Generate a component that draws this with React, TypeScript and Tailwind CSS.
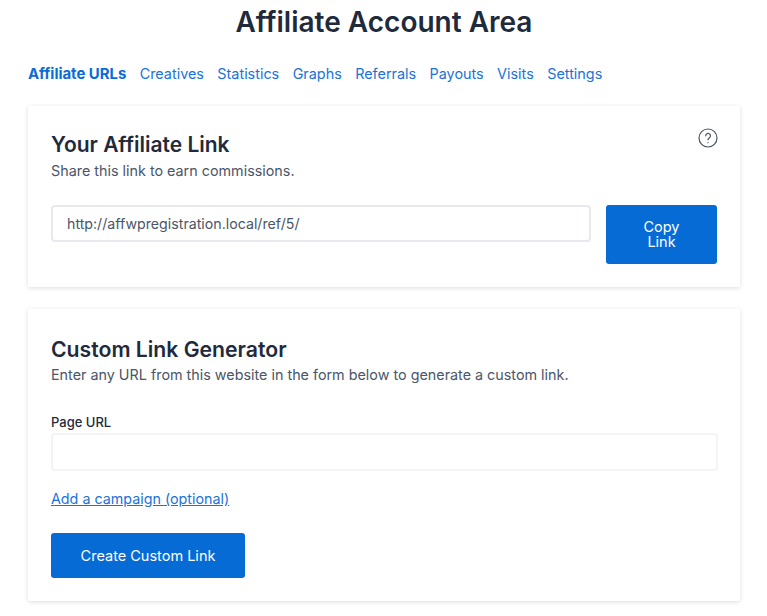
import React from 'react';

const tabs = ['Creatives', 'Statistics', 'Graphs', 'Referrals', 'Payouts', 'Visits', 'Settings'];

const App: React.FC = () => {
  return (
    <div className="h-[616px] overflow-hidden bg-white pr-[27px] pl-7 font-['Inter',sans-serif] text-[#1f2a3d]">
      <h1 className="pt-[4px] text-center text-[28px] leading-[36px] font-semibold">Affiliate Account Area</h1>

      {/* Tabs */}
      <nav className="mt-[24px] flex gap-[13.4px] text-[14.4px] leading-[20px] text-[#1a73d9]">
        <a className="text-[14.9px] font-bold text-[#0b6bd6]">Affiliate URLs</a>
        {tabs.map((tab) => (
          <a key={tab}>{tab}</a>
        ))}
      </nav>

      {/* Your Affiliate Link */}
      <section className="relative mt-[22px] h-[181px] rounded-[2px] bg-white px-[23px] pt-[25px] shadow-[0_1px_4px_rgba(30,41,59,0.16)]">
        <h2 className="text-[21px] leading-[28px] font-semibold">Your Affiliate Link</h2>
        <p className="mt-[2px] text-[14.35px] leading-[20px] text-[#4a5568]">Share this link to earn commissions.</p>
        <svg className="absolute top-[22px] right-[22px] h-5 w-5" viewBox="0 0 20 20" fill="none" stroke="#4a5568" strokeWidth="1.2" strokeLinecap="round">
          <circle cx="10" cy="10" r="9" />
          <path d="M7.7 7.8a2.4 2.4 0 1 1 3.6 2.1c-.8.5-1.3 1-1.3 1.9" />
          <path d="M10 14.6v.1" />
        </svg>
        <div className="mt-[24px] flex items-start gap-[15px]">
          <div className="flex h-[37px] flex-1 items-center rounded-[4px] border-2 border-[#e8e9ed] px-[14px] text-[14.2px] text-[#4a5568]">
            http://affwpregistration.local/ref/5/
          </div>
          <button className="h-[59px] w-[111px] rounded-[3px] bg-[#076bd6] px-8 text-[14.5px] leading-[14.5px] text-white">
            Copy Link
          </button>
        </div>
      </section>

      {/* Custom Link Generator */}
      <section className="mt-[22px] h-[292px] rounded-[2px] bg-white pt-[26px] pr-[22px] pl-[23px] shadow-[0_1px_4px_rgba(30,41,59,0.16)]">
        <h2 className="text-[21.2px] leading-[28px] font-semibold">Custom Link Generator</h2>
        <p className="mt-[2px] text-[14.35px] leading-[20px] text-[#4a5568]">
          Enter any URL from this website in the form below to generate a custom link.
        </p>
        <label className="mt-[28px] block text-[13px] leading-[18px] font-medium">Page URL</label>
        <div className="mt-[2px] h-[38px] rounded-[4px] border-2 border-[#f3f4f6]" />
        <a className="mt-[18px] block text-[14.3px] leading-[20px] text-[#1a73d9] underline">Add a campaign (optional)</a>
        <button className="mt-[24px] h-[45px] w-[194px] rounded-[3px] bg-[#076bd6] text-[14.5px] text-white">
          Create Custom Link
        </button>
      </section>
    </div>
  );
};

export default App;
